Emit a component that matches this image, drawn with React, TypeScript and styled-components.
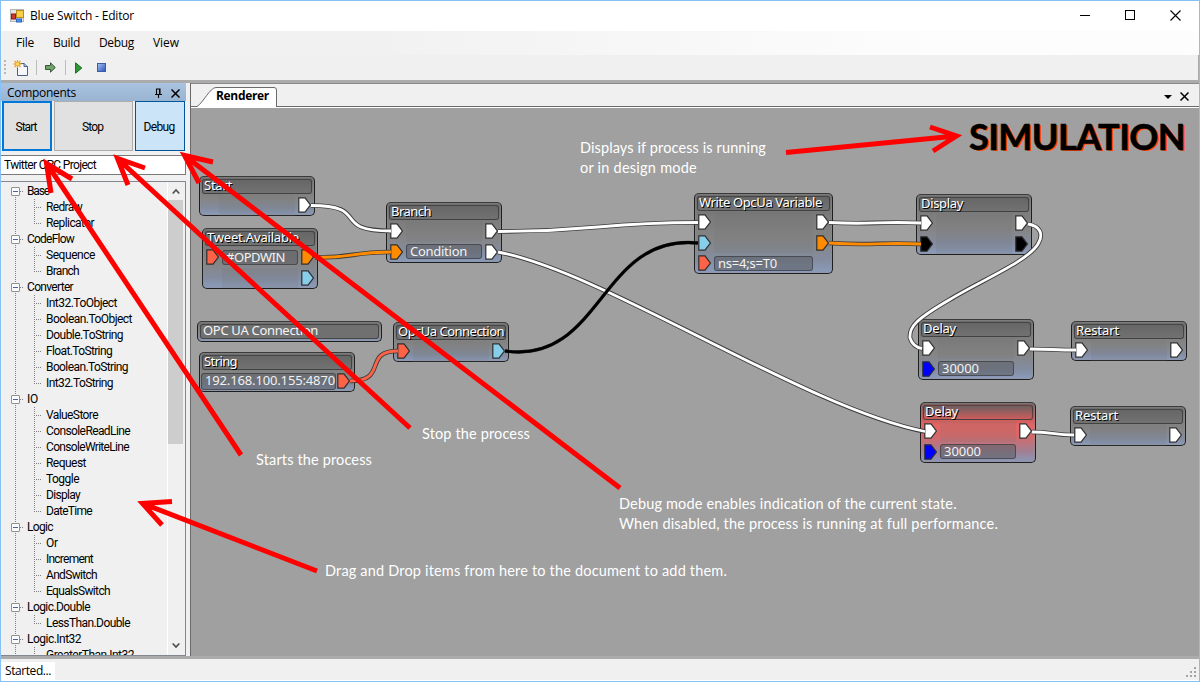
import React, { useLayoutEffect, useRef } from "react";
import styled, { createGlobalStyle, css } from "styled-components";

const GlobalStyle = createGlobalStyle`
  * { box-sizing: border-box; }
  body { margin: 0; overflow: hidden; }
`;

const UI_FONT = `"Open Sans", "Noto Sans", sans-serif`;
const TREE_FONT = `Roboto, "Liberation Sans", sans-serif`;
const NODE_FONT = `"Noto Sans", "Open Sans", sans-serif`;
const NOTE_FONT = `Lato, "Open Sans", sans-serif`;

/* ---------- text tracked to a given width ---------- */

const Tracked = styled.span`
  display: inline-block;
  white-space: pre;
`;

function Label({ text, width }: { text: string; width: number }) {
  const ref = useRef<HTMLSpanElement>(null);
  useLayoutEffect(() => {
    const el = ref.current;
    if (!el) return;
    el.style.letterSpacing = "0px";
    const natural = el.getBoundingClientRect().width;
    el.style.letterSpacing = `${(width - natural) / text.length}px`;
  }, [text, width]);
  return <Tracked ref={ref}>{text}</Tracked>;
}

/* ---------- window frame ---------- */

const Window = styled.div`
  position: relative;
  width: 1200px;
  height: 682px;
  display: flex;
  flex-direction: column;
  border: 1px solid #86c0f4;
  background: #f0f0f0;
  color: #000;
  font: 12px/16px ${UI_FONT};
  overflow: hidden;
`;

const TitleBar = styled.header`
  flex: 0 0 30px;
  display: flex;
  align-items: center;
  background: #fff;
  padding-left: 9px;
  gap: 5px;
  svg { display: block; }
`;

const WindowButtons = styled.div`
  margin-left: auto;
  padding-right: 18px;
  padding-bottom: 1px;
  display: flex;
  gap: 34px;
`;

const MenuBar = styled.nav`
  flex: 0 0 24px;
  display: flex;
  align-items: center;
  gap: 19px;
  padding-left: 15px;
  background: linear-gradient(90deg, #f0f0f0 0, #f1f1f1 30%, #fcfcfc 75%, #fdfdfd 100%);
`;

const ToolBar = styled.div`
  flex: 0 0 25px;
  display: flex;
  align-items: center;
  background: #f0f0f0;
  border-right: 1px solid #aaa;
  padding-left: 3px;
  svg { display: block; }
`;

const Grip = styled.i`
  width: 2px;
  height: 15px;
  margin-right: 7px;
  background: repeating-linear-gradient(#b8b8b8 0 2px, transparent 2px 4px);
`;

const ToolSeparator = styled.i<{ $before: number; $after: number }>`
  width: 1px;
  height: 15px;
  margin: 0 ${(p) => p.$after}px 0 ${(p) => p.$before}px;
  background: #bdbdbd;
`;

const Workspace = styled.main`
  flex: 1;
  min-height: 0;
  display: flex;
  gap: 4px;
  background: #f0f0f0;
  border-top: 3px solid #ababab;
  border-bottom: 3px solid #ababab;
`;

/* ---------- components panel ---------- */

const Sidebar = styled.aside`
  flex: 0 0 185px;
  display: flex;
  flex-direction: column;
  min-height: 0;
  font-family: ${TREE_FONT};
`;

const PanelHeader = styled.div`
  flex: 0 0 18px;
  display: flex;
  align-items: center;
  padding: 2px 6px 0 6px;
  background: linear-gradient(#a9c3e0, #99b4d1);
  font-family: ${UI_FONT};
  svg { margin-left: 8px; }
  span + svg { margin-left: auto; }
`;

const ButtonRow = styled.div`
  flex: 0 0 50px;
  display: grid;
  grid-template-columns: 50px 79px 50px;
  gap: 2px;
  padding-left: 1px;
`;

const PanelButton = styled.button<{ $look: "focused" | "plain" | "pressed" }>`
  padding: 1px 2px 0 0;
  background: #e1e1e1;
  border: 1px solid #adadad;
  font: 12px/16px ${TREE_FONT};
  color: #000;
  ${(p) => p.$look === "focused" && css`border: 2px solid #0078d7;`}
  ${(p) => p.$look === "pressed" && css`background: #cce4f7; border-color: #005499;`}
`;

const ProjectField = styled.div`
  flex: 0 0 20px;
  margin-top: 4px;
  padding: 1px 0 0 3px;
  border: 1px solid #7a7a7a;
  border-left: 0;
  background: #fff;
`;

const TreeBox = styled.div`
  flex: 1;
  min-height: 0;
  margin-top: 6px;
  display: flex;
  border: 1px solid #828790;
  border-left: 0;
  background: #f0f0f0;
  overflow: hidden;
`;

const Tree = styled.div`
  flex: 1;
  padding: 1px 0 0 9px;
`;

const Group = styled.div`
  display: flex;
  flex-direction: column;
  background: repeating-linear-gradient(#808080 0 1px, transparent 1px 2px) 5px 0 / 1px 100% no-repeat;
`;

const GroupRow = styled.div<{ $first?: boolean }>`
  height: 16px;
  display: flex;
  align-items: center;
  ${(p) => p.$first && css`background: linear-gradient(#f0f0f0, #f0f0f0) 0 0 / 10px 8px no-repeat;`}
`;

const Expander = styled.i`
  width: 9px;
  height: 9px;
  margin-left: 1px;
  border: 1px solid #919191;
  border-radius: 1px;
  background: linear-gradient(#4b63a7, #4b63a7) 1px 3px / 5px 1px no-repeat, #fafafa;
`;

const Dots = styled.i<{ $w: number }>`
  width: ${(p) => p.$w}px;
  height: 1px;
  background: repeating-linear-gradient(90deg, #808080 0 1px, transparent 1px 2px);
`;

const GroupLabel = styled.span`
  margin-left: 3px;
`;

const Leaf = styled.div<{ $last: boolean }>`
  height: 16px;
  margin-left: 24px;
  display: flex;
  align-items: center;
  gap: 4px;
  background: repeating-linear-gradient(#808080 0 1px, transparent 1px 2px) 0 0 / 1px ${(p) => (p.$last ? "8px" : "16px")} no-repeat;
`;

const ScrollBar = styled.div`
  width: 18px;
  display: flex;
  flex-direction: column;
  justify-content: space-between;
  align-items: center;
  border-left: 1px solid #fff;
  padding: 6px 2px 6px 0;
  svg { display: block; }
`;

const Thumb = styled.i`
  width: 15px;
  height: 244px;
  margin: 5px 0 auto;
  background: #cdcdcd;
`;

/* ---------- renderer panel ---------- */

const Document = styled.section`
  flex: 1;
  min-width: 0;
  display: flex;
  flex-direction: column;
  border-left: 1px solid #6a6a6a;
`;

const TabStrip = styled.div`
  flex: 0 0 24px;
  display: flex;
  align-items: flex-end;
  justify-content: space-between;
  border-top: 1px solid #8a8a8a;
  border-bottom: 1px solid #6a6a6a;
  background: #f0f0f0;
`;

const Tab = styled.div`
  position: relative;
  width: 87px;
  height: 20px;
  margin-bottom: -1px;
  padding: 1px 0 0 25px;
  font-weight: 700;
  svg { position: absolute; left: 0; top: 0; }
  span { position: relative; }
`;

const TabTools = styled.div`
  display: flex;
  align-items: center;
  gap: 8px;
  padding: 0 10px 5px 0;
  svg { display: block; }
`;

const Canvas = styled.div`
  position: relative;
  flex: 1;
  border-top: 1px solid #fff;
  background: #a0a0a0;
  overflow: hidden;
  font-family: ${NODE_FONT};
`;

/* The diagram plane shares its origin with the window. */
const Plane = styled.div`
  position: absolute;
  left: -191px;
  top: -108px;
  width: 1200px;
  height: 682px;
`;

const WireLayer = styled.svg`
  position: absolute;
  left: 0;
  top: 0;
`;

const NodeBox = styled.div<{ $x: number; $y: number; $w: number; $h?: number; $alert?: boolean }>`
  position: absolute;
  left: ${(p) => p.$x}px;
  top: ${(p) => p.$y}px;
  width: ${(p) => p.$w}px;
  height: ${(p) => (p.$h ? `${p.$h}px` : "auto")};
  padding: 2px 2px 0 2px;
  border: 1px solid #1e1e1e;
  border-top-color: #3a3a3a;
  border-radius: 5px;
  box-shadow: inset 0 0 0 1px rgba(150, 150, 150, 0.35);
  background: ${(p) =>
    p.$alert
      ? "linear-gradient(#6c6262 0, #b35656 18%, #e56464 38%, #d86868 55%, #a08093 82%, #8b98b8 100%)"
      : "linear-gradient(#6c6c6c 0, #7c7c7c 30%, #858585 58%, #838c9e 82%, #8b9bbb 100%)"};
`;

const NodeTitle = styled.div<{ $alert?: boolean }>`
  height: 15px;
  margin-bottom: 1px;
  padding-left: 1px;
  border: 1px solid rgba(40, 40, 40, 0.6);
  border-radius: 3px;
  background: ${(p) => (p.$alert ? "linear-gradient(#6b6060, #cf5c5c)" : "linear-gradient(#666, #727272)")};
  color: #fff;
  font-size: 13px;
  line-height: 10px;
  text-shadow: 1px 1px 0 #000;
`;

const PinRow = styled.div<{ $flush?: boolean }>`
  height: 20.5px;
  display: flex;
  align-items: center;
  gap: ${(p) => (p.$flush ? 1 : 3)}px;
  padding-left: ${(p) => (p.$flush ? 0 : 1)}px;
  padding-right: ${(p) => (p.$flush ? 2 : 1)}px;
  margin-left: ${(p) => (p.$flush ? -1 : 0)}px;
  svg { display: block; flex: none; }
`;

const PinSpace = styled.i`
  flex: 0 0 13px;
`;

const Slot = styled.div`
  flex: 1;
  align-self: stretch;
  background: rgba(110, 110, 110, 0.16);
`;

const ValueField = styled.div<{ $tall?: boolean }>`
  flex: 1;
  height: ${(p) => (p.$tall ? 17 : 15)}px;
  padding-left: 3px;
  border: 1px solid rgba(50, 50, 55, 0.6);
  border-radius: 3px;
  background: rgba(90, 92, 98, 0.55);
  color: #f2f2f2;
  font-size: 13px;
  line-height: ${(p) => (p.$tall ? 13 : 13)}px;
`;

const CommentText = styled.div`
  height: 15px;
  padding-left: 2px;
  border: 1px solid rgba(40, 40, 40, 0.6);
  border-radius: 3px;
  background: #707070;
  color: #f5f5f5;
  font-size: 13px;
  line-height: 11px;
`;

const Note = styled.p<{ $x: number; $y: number }>`
  position: absolute;
  left: ${(p) => p.$x}px;
  top: ${(p) => p.$y}px;
  margin: 0;
  display: flex;
  flex-direction: column;
  align-items: flex-start;
  color: #fff;
  font-family: ${NOTE_FONT};
  font-size: 14.5px;
  line-height: 20px;
`;

const Mode = styled.div`
  position: absolute;
  left: 969px;
  top: 112px;
  font: 700 36px/48px ${NOTE_FONT};
  color: #000;
  -webkit-text-stroke: 0.5px #000;
  text-shadow: 2px 1px 0 #ff4500;
`;

const StatusBar = styled.footer`
  flex: 0 0 22px;
  display: flex;
  justify-content: space-between;
  align-items: center;
  border-bottom: 1px solid #fff;
  svg { margin: 4px 3px 0 0; }
`;

const StatusText = styled.div`
  width: 54px;
  height: 18px;
  margin-top: 3px;
  padding: 1px 0 0 4px;
  background: #fff;
`;

const ArrowLayer = styled.svg`
  position: absolute;
  left: -1px;
  top: -1px;
  pointer-events: none;
`;

/* ---------- data ---------- */

type Entry = [string, number];

const TREE: { name: Entry; items: Entry[] }[] = [
  { name: ["Base", 22], items: [["Redraw", 36], ["Replicator", 48]] },
  { name: ["CodeFlow", 47], items: [["Sequence", 49], ["Branch", 33]] },
  {
    name: ["Converter", 46],
    items: [
      ["Int32.ToObject", 71], ["Boolean.ToObject", 86], ["Double.ToString", 77],
      ["Float.ToString", 66], ["Boolean.ToString", 82], ["Int32.ToString", 67],
    ],
  },
  {
    name: ["IO", 11],
    items: [
      ["ValueStore", 52], ["ConsoleReadLine", 84], ["ConsoleWriteLine", 83],
      ["Request", 40], ["Toggle", 33], ["Display", 34], ["DateTime", 46],
    ],
  },
  { name: ["Logic", 26], items: [["Or", 12], ["Increment", 47], ["AndSwitch", 51], ["EqualsSwitch", 64]] },
  { name: ["Logic.Double", 63], items: [["LessThan.Double", 84]] },
  { name: ["Logic.Int32", 54], items: [["GreaterThan.Int32", 88]] },
];

const WHITE = "#ffffff";
const ORANGE = "#ff8c00";
const RED = "#ff6347";
const SKY = "#87ceeb";
const BLUE = "#0000ff";
const BLACK = "#000000";

interface Row { in?: string; out?: string; value?: Entry }
interface NodeDef { x: number; y: number; w?: number; title: Entry; rows: Row[]; alert?: boolean; flush?: boolean }

const NODES: NodeDef[] = [
  { x: 199, y: 176, title: ["Start", 28], rows: [{ out: WHITE }] },
  { x: 386, y: 202, title: ["Branch", 40], rows: [{ in: WHITE, out: WHITE }, { in: ORANGE, out: WHITE, value: ["Condition", 57] }] },
  { x: 202, y: 228, title: ["Tweet.Available", 92], rows: [{ in: RED, out: ORANGE, value: ["#OPDWIN", 59] }, { out: SKY }] },
  { x: 199, y: 352, w: 156, title: ["String", 33], flush: true, rows: [{ out: RED, value: ["192.168.100.155:4870", 130] }] },
  { x: 393, y: 322, title: ["OpcUa Connection", 106], rows: [{ in: RED, out: SKY }] },
  {
    x: 694, y: 193, w: 139, title: ["Write OpcUa Variable", 123],
    rows: [{ in: WHITE, out: WHITE }, { in: SKY, out: ORANGE }, { in: RED, value: ["ns=4;s=T0", 59] }],
  },
  { x: 916, y: 194, title: ["Display", 42], rows: [{ in: WHITE, out: WHITE }, { in: BLACK, out: BLACK }] },
  { x: 918, y: 319, title: ["Delay", 33], rows: [{ in: WHITE, out: WHITE }, { in: BLUE, value: ["30000", 37] }] },
  { x: 1071, y: 321, title: ["Restart", 43], rows: [{ in: WHITE, out: WHITE }] },
  { x: 920, y: 402, title: ["Delay", 33], alert: true, rows: [{ in: WHITE, out: WHITE }, { in: BLUE, value: ["30000", 37] }] },
  { x: 1070, y: 406, title: ["Restart", 43], rows: [{ in: WHITE, out: WHITE }] },
];

const WIRES: { d: string; color: string }[] = [
  { d: "M311 205.500C372 205.500 329 231 391 231", color: WHITE },
  { d: "M315 257.500C355 258 350 252 391 252", color: ORANGE },
  { d: "M498 231.500C598 231.500 598 222.500 698 222.500", color: WHITE },
  { d: "M498 252C605 272 805 408 925 431.500", color: WHITE },
  { d: "M350 381C389 381 362 351 398 351", color: RED },
  { d: "M505 351C602 365 600 233 698 243", color: BLACK },
  { d: "M829 222.500C875 225 875 221 921 223", color: WHITE },
  { d: "M829 243C875 246 875 242 921 244", color: ORANGE },
  { d: "M1028 224C1040 226 1044 234 1038 244C1028 261 982 280 949 300C915 320 909 327 910 338Q913 347 922 348.500", color: WHITE },
  { d: "M1030 349C1050 349 1055 350 1076 350", color: WHITE },
  { d: "M1032 432C1050 432 1055 435 1074 435", color: WHITE },
];

const ARROWS = [
  "M241 455L47 164M72 179L46.500 163.500L51 193",
  "M410 428L118 159M145 168L117.500 158.500L128 185",
  "M620 488L185 156M213 162L184.500 155.500L199 183",
  "M317 571L144 504M172 501.500L142.500 503.500L162 525",
  "M786 152.500L956 136M930 127L956.500 136L933 151",
];

/* ---------- small pieces ---------- */

const Pin = ({ color }: { color: string }) => (
  <svg width="13" height="16" viewBox="0 0 13 16">
    <path d="M.8.8H7L12.400 8L7 15.200H.8Z" fill={color} stroke="#2e2e2e" strokeWidth="1.200" />
  </svg>
);

const Cross = ({ size, weight }: { size: number; weight: number }) => (
  <svg width={size} height={size} viewBox={`0 0 ${size} ${size}`}>
    <path d={`M.5.5L${size - 0.5} ${size - 0.5}M${size - 0.5}.5L.5 ${size - 0.5}`} stroke="#000" strokeWidth={weight} />
  </svg>
);

function DiagramNode({ node }: { node: NodeDef }) {
  return (
    <NodeBox $x={node.x} $y={node.y} $w={node.w ?? 116} $alert={node.alert} $h={node.rows.length * 20.5 + 19.5}>
      <NodeTitle $alert={node.alert}><Label text={node.title[0]} width={node.title[1]} /></NodeTitle>
      {node.rows.map((row, i) => (
        <PinRow key={i} $flush={node.flush}>
          {row.in ? <Pin color={row.in} /> : !node.flush && <PinSpace />}
          {row.value ? (
            <ValueField $tall={node.flush}><Label text={row.value[0]} width={row.value[1]} /></ValueField>
          ) : <Slot />}
          {row.out ? <Pin color={row.out} /> : <PinSpace />}
        </PinRow>
      ))}
    </NodeBox>
  );
}

export default function App() {
  return (
    <>
      <GlobalStyle />
      <Window>
        <TitleBar>
          <svg width="15" height="14" viewBox="0 0 15 14">
            <rect x=".5" y=".5" width="13" height="12" fill="#e4e4e4" stroke="#b5b5b5" />
            <rect x="6.500" y="1.500" width="7" height="7" fill="#fbcf45" stroke="#b98a1c" />
            <rect x="1.500" y="5" width="4" height="5" fill="#cc3a2c" stroke="#8c1c14" />
            <rect x="6.500" y="10" width="5" height="3" fill="#4f8ff0" stroke="#2b62c4" />
          </svg>
          <Label text="Blue Switch - Editor" width={104} />
          <WindowButtons>
            <svg width="11" height="11"><path d="M0 5.500H10" stroke="#000" /></svg>
            <svg width="11" height="11"><rect x=".5" y=".5" width="9" height="9" fill="none" stroke="#000" /></svg>
            <Cross size={11} weight={1.1} />
          </WindowButtons>
        </TitleBar>
        <MenuBar>
          <Label text="File" width={18} />
          <Label text="Build" width={27} />
          <Label text="Debug" width={35} />
          <Label text="View" width={26} />
        </MenuBar>
        <ToolBar>
          <Grip />
          <svg width="16" height="16" viewBox="0 0 16 16">
            <path d="M4.500 3.500H11L14.500 6.500V15.500H4.500Z" fill="#f4f8fd" stroke="#4a6184" />
            <path d="M11 3.500V6.500H14.500" fill="#b8c8de" stroke="#4a6184" />
            <path d="M4.500 0V8M.5 4H8.500M1.500 1L7.500 7M7.500 1L1.500 7" stroke="#f0a020" strokeWidth="1.300" />
            <circle cx="4.500" cy="4" r="1.500" fill="#ffe26a" />
          </svg>
          <ToolSeparator $before={7} $after={8} />
          <svg width="11" height="11" viewBox="0 0 11 11">
            <path d="M.5 3.500H5.500V.8L10.300 5.500L5.500 10.200V7.500H.5Z" fill="#6fa566" stroke="#37563a" />
          </svg>
          <ToolSeparator $before={9} $after={9} />
          <svg width="8" height="12" viewBox="0 0 8 12">
            <path d="M.6.8L6.800 6L.6 11.200Z" fill="#2d9a34" stroke="#166b1c" />
          </svg>
          <svg width="31" height="9" viewBox="0 0 31 9">
            <defs>
              <linearGradient id="stop" x1="0" y1="0" x2="1" y2="1">
                <stop offset="0" stopColor="#a9c5f5" />
                <stop offset="1" stopColor="#2650b8" />
              </linearGradient>
            </defs>
            <rect x="14.500" y=".5" width="8" height="8" fill="url(#stop)" stroke="#3c5ca8" />
          </svg>
        </ToolBar>
        <Workspace>
          <Sidebar>
            <PanelHeader>
              <Label text="Components" width={69} />
              <svg width="9" height="11" viewBox="0 0 9 11">
                <path d="M2.500 6V1H6V6M5.500 1V6M1 6.500H8M4.500 7V10" fill="none" stroke="#000" strokeWidth="1.100" />
              </svg>
              <Cross size={9} weight={1.5} />
            </PanelHeader>
            <ButtonRow>
              <PanelButton $look="focused"><Label text="Start" width={21} /></PanelButton>
              <PanelButton $look="plain"><Label text="Stop" width={21} /></PanelButton>
              <PanelButton $look="pressed"><Label text="Debug" width={31} /></PanelButton>
            </ButtonRow>
            <ProjectField><Label text="Twitter OPC Project" width={92} /></ProjectField>
            <TreeBox>
              <Tree>
                {TREE.map((group, g) => (
                  <Group key={group.name[0]}>
                    <GroupRow $first={g === 0}>
                      <Expander />
                      <Dots $w={4} />
                      <GroupLabel><Label text={group.name[0]} width={group.name[1]} /></GroupLabel>
                    </GroupRow>
                    {group.items.map((item, i) => (
                      <Leaf key={item[0]} $last={i === group.items.length - 1}>
                        <Dots $w={8} />
                        <Label text={item[0]} width={item[1]} />
                      </Leaf>
                    ))}
                  </Group>
                ))}
              </Tree>
              <ScrollBar>
                <svg width="8" height="7" viewBox="0 0 8 7"><path d="M.7 5.500L4 2L7.300 5.500" fill="none" stroke="#505050" strokeWidth="1.700" /></svg>
                <Thumb />
                <svg width="8" height="7" viewBox="0 0 8 7"><path d="M.7 1.500L4 5L7.300 1.500" fill="none" stroke="#505050" strokeWidth="1.700" /></svg>
              </ScrollBar>
            </TreeBox>
          </Sidebar>
          <Document>
            <TabStrip>
              <Tab>
                <svg width="87" height="20" viewBox="0 0 87 20">
                  <path d="M6 19.500C12 16 19 .5 25 .5H83Q85.500.5 85.500 3V20H6Z" fill="#fff" />
                  <path d="M6 19.500C12 16 19 .5 25 .5H83Q85.500.5 85.500 3V20" fill="none" stroke="#6a6a6a" />
                </svg>
                <Label text="Renderer" width={53} />
              </Tab>
              <TabTools>
                <svg width="8" height="4"><path d="M0 0H8L4 4Z" /></svg>
                <Cross size={9} weight={1.5} />
              </TabTools>
            </TabStrip>
            <Canvas>
              <Plane>
                <NodeBox $x={197} $y={321} $w={185} $h={21}>
                  <CommentText><Label text="OPC UA Connection" width={115} /></CommentText>
                </NodeBox>
                {NODES.map((node, i) => <DiagramNode key={i} node={node} />)}
                <WireLayer width="1200" height="682" fill="none">
                  {WIRES.map((wire) => (
                    <g key={wire.d}>
                      <path d={wire.d} stroke="#3c3c3c" strokeWidth={wire.color === BLACK ? 3.4 : 4.6} />
                      <path d={wire.d} stroke={wire.color} strokeWidth="2.800" />
                    </g>
                  ))}
                </WireLayer>
                <Mode><Label text="SIMULATION" width={216} /></Mode>
                <Note $x={580} $y={138}>
                  <Label text="Displays if process is running" width={186} />
                  <Label text="or in design mode" width={117} />
                </Note>
                <Note $x={422} $y={424}><Label text="Stop the process" width={108} /></Note>
                <Note $x={256} $y={450}><Label text="Starts the process" width={116} /></Note>
                <Note $x={619} $y={494}>
                  <Label text="Debug mode enables indication of the current state." width={338} />
                  <Label text="When disabled, the process is running at full performance." width={379} />
                </Note>
                <Note $x={325} $y={561}>
                  <Label text="Drag and Drop items from here to the document to add them." width={402} />
                </Note>
              </Plane>
            </Canvas>
          </Document>
        </Workspace>
        <StatusBar>
          <StatusText><Label text="Started..." width={46} /></StatusText>
          <svg width="10" height="10" fill="#a5a5a5">
            {[[8, 0], [4, 4], [8, 4], [0, 8], [4, 8], [8, 8]].map(([x, y]) => (
              <rect key={`${x}-${y}`} x={x} y={y} width="2" height="2" />
            ))}
          </svg>
        </StatusBar>
        <ArrowLayer width="1200" height="682" fill="none" stroke="#ff0000" strokeWidth="5">
          {ARROWS.map((d) => <path key={d} d={d} />)}
        </ArrowLayer>
      </Window>
    </>
  );
}
